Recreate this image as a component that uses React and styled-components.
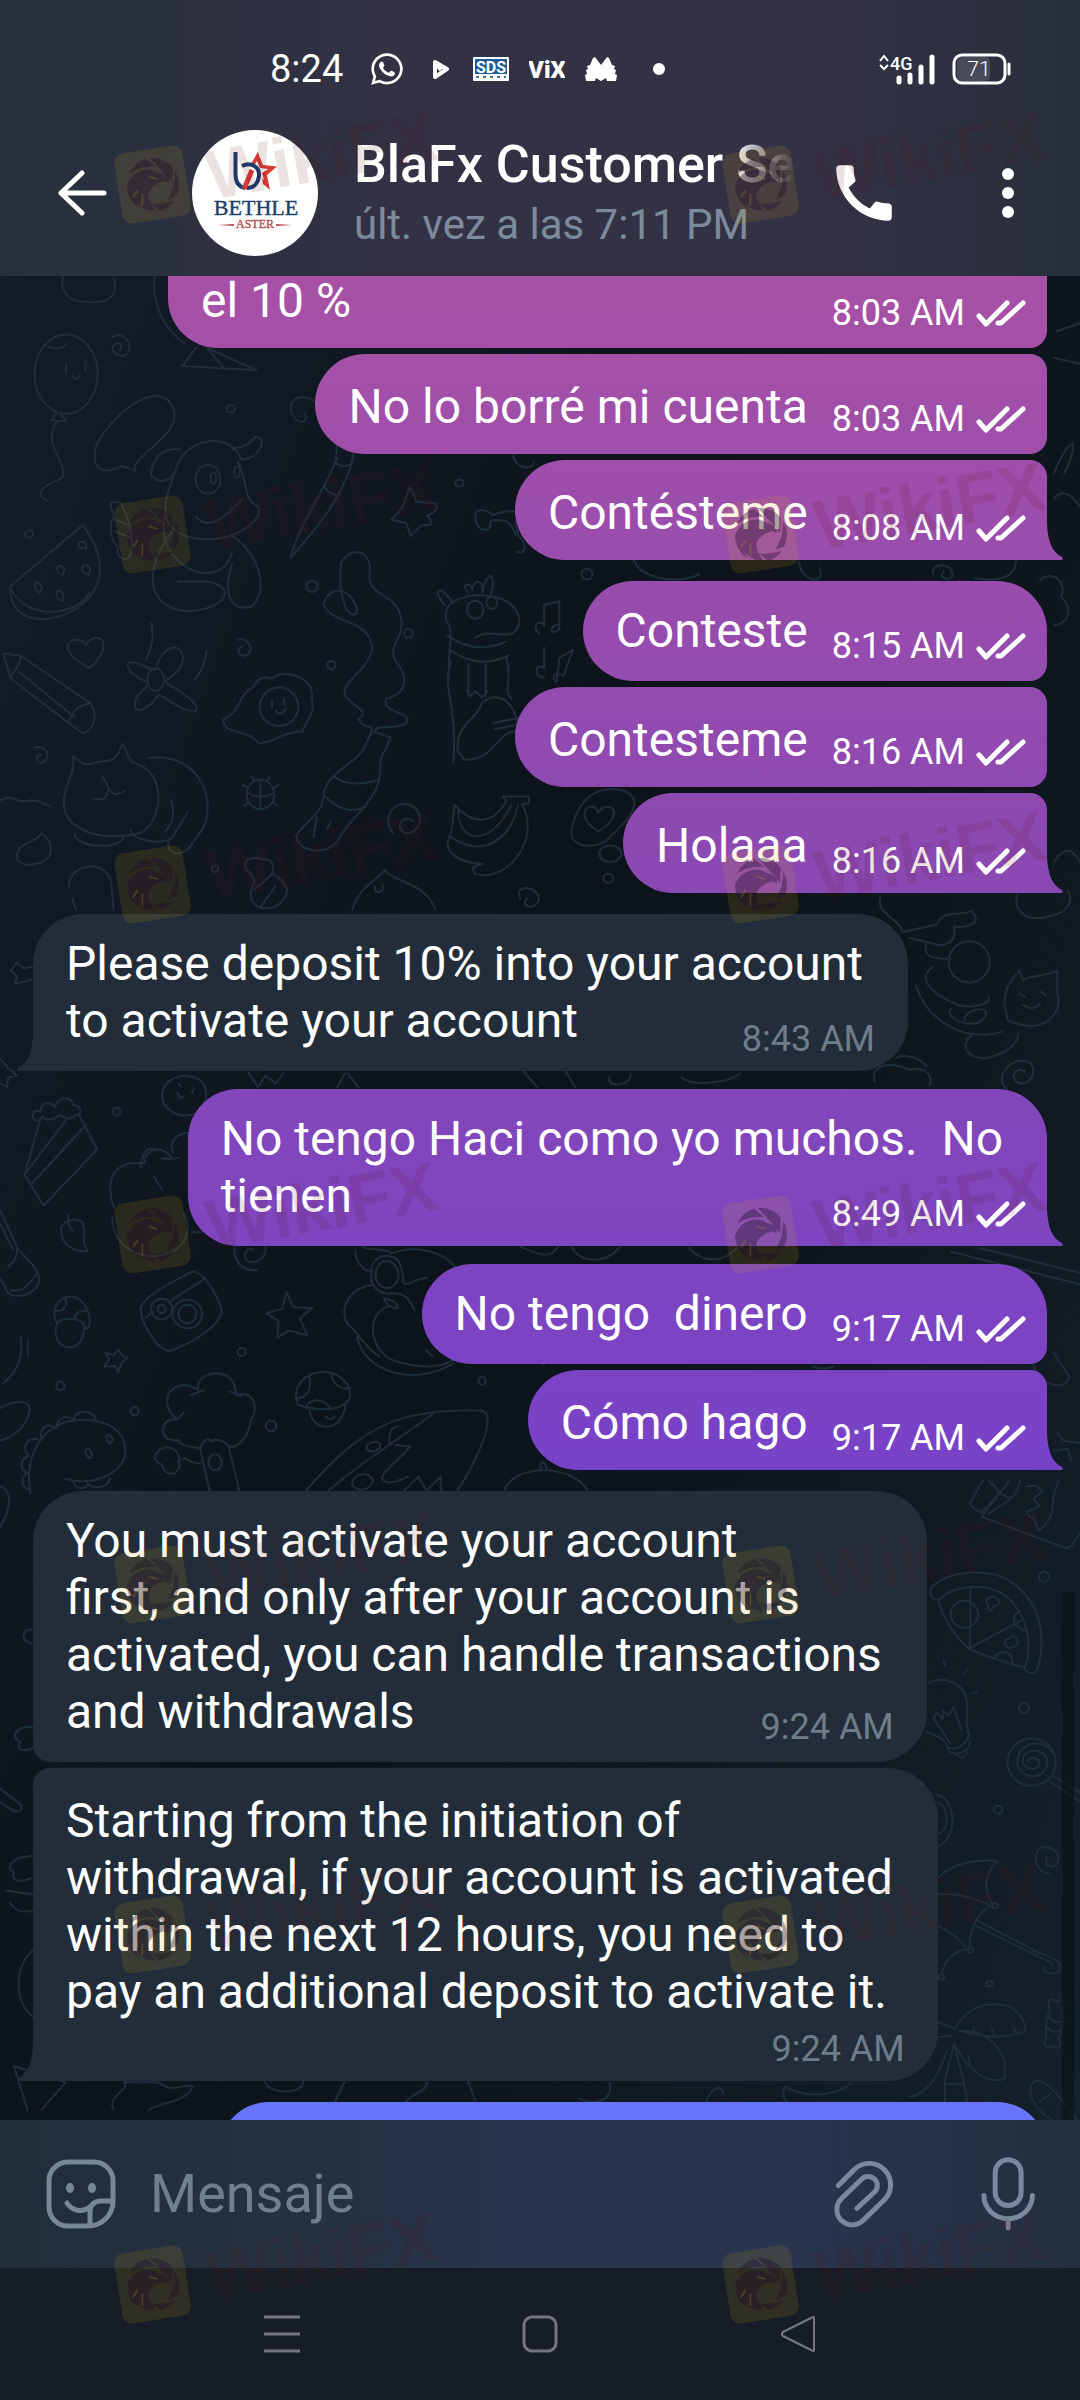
import React from "react";
import styled, { createGlobalStyle } from 'styled-components';
import { FaWhatsapp } from 'react-icons/fa';
import { MdCall } from 'react-icons/md';

const messages = [
  { text: '\nel 10 %', time: '8:03 AM', out: true, layout: 'corner', minWidth: 879 },
  { text: 'No lo borré mi cuenta', time: '8:03 AM', out: true },
  { text: 'Contésteme', time: '8:08 AM', out: true, last: true },
  { text: 'Conteste', time: '8:15 AM', out: true, first: true },
  { text: 'Contesteme', time: '8:16 AM', out: true },
  { text: 'Holaaa', time: '8:16 AM', out: true, last: true },
  { text: 'Please deposit 10% into your account\nto activate your account', time: '8:43 AM', first: true, last: true, layout: 'corner' },
  { text: 'No tengo Haci como yo muchos.  No\ntienen', time: '8:49 AM', out: true, first: true, last: true, layout: 'corner' },
  { text: 'No tengo  dinero', time: '9:17 AM', out: true, first: true },
  { text: 'Cómo hago', time: '9:17 AM', out: true, last: true },
  { text: 'You must activate your account\nfirst, and only after your account is\nactivated, you can handle transactions\nand withdrawals', time: '9:24 AM', first: true, layout: 'corner' },
  { text: 'Starting from the initiation of\nwithdrawal, if your account is activated\nwithin the next 12 hours, you need to\npay an additional deposit to activate it.', time: '9:24 AM', last: true, layout: 'below' },
  { text: '', out: true, first: true, minWidth: 828 },
];

const BackIcon = () => (
  <svg width="50" height="46" viewBox="0 0 50 46" fill="none" stroke="#fff" strokeWidth="5" strokeLinecap="round" strokeLinejoin="round">
    <path d="M24 3 L3 23 L24 43 M3 23 H46" />
  </svg>
);

const DotsIcon = () => (
  <svg width="20" height="52" viewBox="0 0 20 52" fill="#fff">
    <circle cx="10" cy="7" r="6" />
    <circle cx="10" cy="26" r="6" />
    <circle cx="10" cy="45" r="6" />
  </svg>
);

const AvatarLogo = () => (
  <svg width="126" height="126" viewBox="0 0 126 126">
    <circle cx="63" cy="63" r="63" fill="#fff" />
    <path d="M65.7 22 L71 35 L85 36.500 L75 45 L78 60 L71 54 L70 48 L72 50 L70 43 L76 39 L68 38 L65 31 L61 37 L58 36 Z" fill="#d93a36" />
    <path d="M43.500 22 V44 C43.500 52 47 57 53 58" fill="none" stroke="#1c3d6b" strokeWidth="4" />
    <path d="M50 36 C60 31 68 38 67 46 C66 54 61 58 55 58" fill="none" stroke="#1c3d6b" strokeWidth="4" />
    <path d="M52 59 L60 40" stroke="#d93a36" strokeWidth="5" />
    <text x="64" y="85" textAnchor="middle" fontFamily="'Liberation Serif', serif" fontSize="22" fill="#1f4066" stroke="#1f4066" strokeWidth="0.4">BETHLE</text>
    <text x="63" y="98" textAnchor="middle" fontFamily="'Liberation Serif', serif" fontSize="12" fill="#b3474a" stroke="#b3474a" strokeWidth="0.3">ASTER</text>
    <path d="M26 95 L42 94 V96 Z M100 95 L84 94 V96 Z" fill="#b3474a" />
  </svg>
);

const PlayIcon = () => (
  <svg width="28" height="20" viewBox="-7 0 28 20" fill="none" stroke="#fff" strokeWidth="4" strokeLinejoin="round">
    <path d="M3 18 V3 L15 10 Z M3 3 L9 11" />
  </svg>
);

const SdsIcon = () => (
  <svg width="36" height="24" viewBox="0 0 36 24">
    <rect width="36" height="24" rx="1" fill="#fff" />
    <rect x="2" y="2" width="32" height="15" fill="#1f5c94" />
    <text x="18" y="16" textAnchor="middle" fontFamily="Roboto, sans-serif" fontSize="16" fontWeight="700" fill="#fff">SDS</text>
    <path d="M3 20 H33" stroke="#41718f" strokeWidth="2" strokeDasharray="3 4" />
  </svg>
);

const VixIcon = () => (
  <svg width="36" height="36" viewBox="0 0 36 36">
    <text x="18" y="27" textAnchor="middle" fontFamily="Roboto, sans-serif" fontSize="24" fontWeight="900" fill="#fff">ViX</text>
  </svg>
);

const BatIcon = () => (
  <svg width="32" height="24" viewBox="0 0 32 24" fill="#fff">
    <path d="M10 0 L16 8 L22 0 L24 1 L27 8 L30 9 L29 12 L31 13 L30 17 L32 18 L31 24 L22 24 L21 21 L16 24 L11 21 L10 24 L1 24 L0 18 L2 17 L1 13 L3 12 L2 9 L5 8 L8 1 Z" />
  </svg>
);

const SignalIcon = () => (
  <svg width="57" height="32" viewBox="0 0 57 32">
    <path d="M1 8 L5 3 L9 8 M1 12 L5 16 L9 12" fill="none" stroke="#fff" strokeWidth="2" />
    <text x="11" y="17" fontFamily="Roboto, sans-serif" fontSize="18" fontWeight="500" fill="#fff">4G</text>
    <path d="M20 25 V29 M31 22 V29 M42 14 V29 M53 4 V29" stroke="#fff" strokeWidth="5" strokeLinecap="round" />
  </svg>
);

const BatteryIcon = () => (
  <svg width="60" height="32" viewBox="0 0 60 32">
    <rect x="5" y="4" width="33" height="24" rx="5" fill="#484959" />
    <rect x="2" y="2" width="51" height="28" rx="8" fill="none" stroke="#fff" strokeWidth="3" />
    <path d="M57 11 V21" stroke="#fff" strokeWidth="3" strokeLinecap="round" />
    <text x="27" y="23" textAnchor="middle" fontFamily="Roboto, sans-serif" fontSize="21" fontWeight="300" fill="#fff">71</text>
  </svg>
);

const TicksIcon = () => (
  <svg width="50" height="27" viewBox="0 0 50 27" fill="none" stroke="#fff" strokeWidth="5" strokeLinecap="round" strokeLinejoin="round">
    <path d="M3 16 L10 24 L31 3 M22 23 L25 23 L47 3" />
  </svg>
);

const StickerIcon = () => (
  <svg width="70" height="70" viewBox="0 0 70 70" fill="none" stroke="#768798" strokeWidth="5" strokeLinecap="round" strokeLinejoin="round">
    <path d="M22 3 H48 A19 19 0 0 1 67 22 V42 C67 56 56 67 42 67 H22 A19 19 0 0 1 3 48 V22 A19 19 0 0 1 22 3 Z" />
    <path d="M66 42 H55 C48 42 44 46 44 53 V66" />
    <path d="M21 44 C26 52 36 54 44 48" />
    <ellipse cx="24" cy="29" rx="4" ry="5" fill="#768798" stroke="none" />
    <ellipse cx="46" cy="29" rx="4" ry="5" fill="#768798" stroke="none" />
  </svg>
);

const ClipIcon = () => (
  <svg width="63" height="72" viewBox="100 90 190 215" fill="none" stroke="#7b879c" strokeWidth="15" strokeLinecap="round">
    <path d="M116 172 L164 124 A64 64 0 0 1 255 215 L191 277 A46 46 0 0 1 125 212 L186 153 A27 27 0 0 1 226 191 L172 241" />
  </svg>
);

const MicIcon = () => (
  <svg width="57" height="78" viewBox="540 80 170 235" fill="none" stroke="#7b879a" strokeWidth="15" strokeLinecap="round">
    <rect x="585" y="94" width="78" height="138" rx="39" />
    <path d="M551 202 A73 70 0 0 0 697 202 M624 272 V300" />
  </svg>
);

const WatermarkLogo = () => (
  <svg width="81" height="81" viewBox="0 0 81 81">
    <g transform="rotate(-9 40 40)">
      <path fillRule="evenodd" d="M16 5 H65 A10 10 0 0 1 75 15 V66 A10 10 0 0 1 65 76 H16 A10 10 0 0 1 6 66 V15 A10 10 0 0 1 16 5 Z" fill="#d9a818" fillOpacity="0.13" />
      <g fill="#1c0c2c" fillOpacity="0.36">
        <path d="M19 26 A27 27 0 0 1 38 14 L47 24 Q32 20 19 26 Z" />
        <path d="M42 14 A27 27 0 0 1 63 27 L60 42 L50 26 Z" />
        <path d="M65 31 A27 27 0 0 1 62 56 L53 58 L61 46 Z" />
        <path d="M59 60 A27 27 0 0 1 44 68 L36 59 Q48 62 59 60 Z" />
        <path d="M15 38 C20 26 38 20 48 30 C54 32 58 36 57 42 L52 39 C46 40 40 42 36 47 C33 52 35 57 39 67 C30 66 24 60 21 54 L24 62 C17 56 14 47 15 38 Z" />
      </g>
      <path d="M38 32 L46 36 M25 44 L19 50 M29 48 L27 60" stroke="#d9a818" strokeOpacity="0.2" strokeWidth="2" />
    </g>
  </svg>
);

// Each group keeps the drawing scale it was traced at, the stroke width stays constant
const Doodles = () => (
  <DoodleSvg aria-hidden="true">
    <g transform="translate(0 -6) scale(0.6888 0.4082)">
      <path d="M92 15 C85 50 100 80 125 78 C160 85 172 60 165 20 M225 10 C218 80 240 150 268 180 M285 190 L265 235 L373 246 L300 190 M300 190 L325 240" />
      <ellipse cx="96" cy="255" rx="46" ry="97" />
      <path d="M82 350 L74 368 L96 371 L88 351 M82 372 C60 430 100 470 90 510 C60 530 50 550 68 565 M96 230 V252 M124 225 V248 M105 260 Q110 275 116 258 M70 188 Q90 198 97 180" />
      <path d="M163 165 C180 145 195 185 185 205 C175 220 158 200 165 185 C172 170 180 190 174 195" />
      <path d="M252 340 C262 400 215 430 195 480 L197 492 L177 480 C130 520 130 440 150 400 C180 330 235 270 252 340" />
      <path d="M455 320 C430 295 415 330 425 355 C435 385 450 370 442 350" />
      <path d="M262 440 C235 430 218 470 220 505 C235 530 250 510 255 490 C270 400 340 400 350 465 C380 460 388 410 372 408 C350 445 345 430 338 440 M255 490 C240 560 220 640 285 658 C340 670 385 610 375 580 C350 560 362 520 345 470" />
      <ellipse cx="302" cy="513" rx="18" ry="35" />
      <ellipse cx="310" cy="510" rx="4" ry="14" />
      <ellipse cx="344" cy="495" rx="4" ry="14" />
      <path d="M285 605 Q305 650 352 560 M250 640 C200 750 220 840 280 835 C335 825 340 770 300 763 H258 M335 650 C370 680 395 780 365 825 C330 840 325 780 337 720 M240 600 C220 720 320 800 337 690" />
      <path d="M175 570 C150 560 165 590 165 600 C155 640 165 670 172 680 C165 710 190 720 190 690 C195 650 185 600 175 570 M165 610 L186 625 M166 640 L188 655" />
      <path d="M490 460 C470 540 430 640 422 705 C450 650 500 560 512 460 M470 530 Q480 555 495 550 M485 470 Q500 490 512 470 M490 400 L488 460 M520 400 L512 460" />
      <path d="M595 530 L605 568 L633 572 Q638 590 620 602 Q636 628 612 625 L596 652 L590 620 L568 612 L585 580 Z" />
      <path d="M690 600 C690 580 710 590 715 600 C740 585 760 590 765 610 C740 610 750 620 752 650 C765 670 765 700 750 690 M690 600 C688 640 715 650 712 615 C740 605 745 630 748 650" />
      <path d="M120 625 C150 690 155 760 125 810 C80 880 10 870 15 775 Z M15 780 C40 860 110 850 130 790" />
      <path d="M115 668 q12 -8 10 15 q-14 -2 -10 -15 M85 725 q12 -2 6 22 q-12 -6 -6 -22 M122 722 q14 4 6 25 q-14 -8 -6 -25 M52 765 q14 10 6 26 q-12 -10 -6 -26 M84 785 q12 4 6 26 q-12 -10 -6 -26" />
      <path d="M470 815 C485 755 520 800 518 840 C505 860 490 800 495 720 C510 670 540 690 537 740 C530 800 575 790 582 850 C590 900 560 920 575 960 C595 1000 590 1040 560 1050 C555 1090 600 1080 590 1110 C570 1130 545 1110 545 1130 M470 815 C475 870 540 850 540 930 C535 980 500 1000 500 1040 C510 1070 540 1080 520 1100 C530 1130 540 1110 540 1130" />
      <path d="M540 1130 L567 1145 L560 1175 C545 1200 560 1240 540 1290 C520 1340 500 1360 490 1400 C470 1440 430 1420 430 1385 C450 1340 470 1330 470 1280 C480 1220 520 1210 530 1165 Z M485 1240 Q505 1270 548 1250 M472 1290 Q502 1340 530 1315 M460 1340 L455 1390 M480 1350 L475 1370" />
      <path d="M652 1000 C650 930 660 880 648 860 C640 800 690 790 715 800 C750 810 765 860 745 890 C720 900 710 880 690 900 M645 820 C625 780 640 770 655 810 M680 790 C665 760 690 770 685 785 C690 745 705 770 700 790 C708 730 722 740 712 800" />
      <ellipse cx="690" cy="832" rx="12" ry="22" />
      <ellipse cx="714" cy="815" rx="8" ry="15" />
      <path d="M650 895 Q690 945 735 910 M652 930 Q695 980 738 945 M655 960 C640 1020 665 1060 658 1210 M735 950 C745 1000 730 1030 742 1050 M680 965 V1035 M705 965 V1045 M678 1030 L682 1045 L690 1032 L700 1047 L708 1032" />
      <path d="M665 1180 C660 1110 690 1110 700 1060 C730 1020 755 1080 750 1130 C720 1130 720 1200 675 1200 Z M715 1110 L775 1090 M718 1125 L778 1105" />
      <path d="M783 890 C772 880 780 850 790 870 V820 L812 812 V880 C800 900 795 870 812 868 M790 998 C775 1000 775 960 790 975 V925 M808 1010 C800 1000 805 980 818 995 L832 930 L812 950 L808 1010" />
      <path d="M130 975 C100 950 90 920 105 908 C115 900 122 910 125 920 C130 900 145 895 150 912 C152 940 140 960 130 975" />
      <path d="M5 940 L30 945 L130 1060 C145 1090 135 1130 120 1135 L100 1110 L15 1000 Z M30 945 C30 970 20 980 15 1000 M28 985 L108 1095 M100 1110 Q105 1070 130 1062" />
      <path d="M185 965 C195 950 215 980 225 980 C240 900 270 920 265 960 C262 990 240 1000 240 1010 C260 1030 290 1060 285 1080 C265 1085 245 1050 230 1040 C220 1070 200 1085 197 1075 C190 1040 215 1030 215 1010 C200 1000 185 985 185 965 M220 865 C225 920 215 940 212 955 M300 935 C298 970 290 985 282 1005" />
      <ellipse cx="226" cy="1003" rx="12" ry="28" />
      <path d="M345 905 C365 900 370 940 355 945 C345 945 343 925 352 922" />
      <path d="M395 1000 C420 970 460 1010 452 1050 C460 1090 440 1110 440 1130 C410 1130 395 1160 375 1160 C360 1120 320 1140 325 1100 C350 1080 345 1050 360 1030 C375 1020 370 990 395 1000" />
      <ellipse cx="405" cy="1070" rx="28" ry="47" />
      <path d="M395 1055 V1070 M412 1050 V1065 M400 1080 Q408 1095 415 1075" />
      <path d="M95 1330 C85 1270 110 1250 106 1190 C125 1220 125 1210 145 1205 C170 1200 170 1195 178 1160 L190 1205 C225 1220 230 1260 230 1300 C228 1340 215 1390 180 1385 C140 1395 105 1370 95 1330 M215 1195 C300 1180 320 1330 285 1390 C265 1450 240 1430 245 1400 M190 1370 C190 1400 240 1410 250 1390 L272 1330 M108 1380 C110 1420 180 1420 180 1385 M135 1295 Q155 1305 158 1270 Q165 1295 182 1275 M148 1240 Q155 1255 158 1270 M248 1298 C255 1330 250 1360 240 1375" />
      <path d="M0 1300 C20 1280 25 1310 40 1300 C55 1295 65 1310 74 1315 M50 1170 C70 1160 75 1200 60 1208 C50 1205 52 1185 60 1188" />
      <ellipse cx="378" cy="1285" rx="20" ry="36" />
      <path d="M358 1280 Q378 1300 398 1280 M378 1250 V1320 M365 1240 L370 1252 M392 1242 L387 1252 M352 1262 L360 1268 M404 1262 L397 1268 M354 1312 L361 1304 M402 1312 L396 1304" />
      <path d="M660 1310 C690 1370 720 1350 735 1300 L730 1290 H768 V1305 L758 1310 C785 1390 740 1500 690 1480 Q680 1462 700 1455 C660 1450 640 1420 655 1380 Z M665 1325 C665 1400 710 1420 742 1312 M655 1390 C700 1440 740 1400 752 1312" />
      <path d="M830 1370 C840 1290 870 1260 905 1275 C940 1300 910 1350 885 1390 C870 1420 825 1420 830 1370 M868 1375 C845 1350 845 1325 855 1315 C865 1312 868 1325 868 1330 C875 1310 890 1312 892 1330 C890 1350 880 1365 868 1375" />
      <path d="M25 1445 C20 1400 50 1410 60 1380 C80 1400 80 1450 50 1455 C40 1460 30 1455 25 1445 M100 1510 C100 1450 160 1440 162 1510 L165 1568 M105 1540 L110 1568 M365 1480 C340 1450 370 1430 380 1445 C395 1440 400 1460 395 1480 C420 1500 425 1530 400 1560 C370 1575 355 1540 370 1500 Z M368 1520 L395 1480 M378 1560 L400 1510" />
      <path d="M512 1568 C520 1510 545 1500 558 1470 C570 1500 620 1500 632 1568 M545 1510 C540 1530 560 1530 555 1505 M755 1540 C745 1500 785 1510 782 1545 C775 1570 755 1560 765 1540" />
      <path d="M570 1380 C555 1340 570 1300 595 1310 C620 1330 610 1380 590 1380 C570 1370 585 1330 600 1350" />
      <path d="M1510 760 C1530 730 1550 770 1540 800 C1560 830 1550 870 1530 870 M1500 830 C1520 850 1520 870 1510 880 M1530 500 C1540 450 1560 410 1558 430 C1558 460 1550 480 1545 500 M1530 560 C1545 530 1560 560 1568 580 M1535 150 L1568 130 M1530 215 L1568 230 M1530 1450 C1550 1400 1560 1430 1568 1450" />
      <path d="M920 710 C930 760 990 770 1015 745 M1160 715 C1165 770 1200 770 1190 730 M1355 745 C1350 715 1385 715 1383 750 C1375 765 1362 750 1370 740 M1415 755 C1470 770 1475 730 1475 710 M745 455 C750 490 775 490 775 470" />
      <ellipse cx="335" cy="340" rx="6" ry="9" />
      <ellipse cx="667" cy="522" rx="6" ry="9" />
      <ellipse cx="453" cy="775" rx="8" ry="14" />
      <ellipse cx="593" cy="890" rx="6" ry="11" />
      <ellipse cx="42" cy="647" rx="6" ry="9" />
      <ellipse cx="481" cy="968" rx="6" ry="10" />
      <ellipse cx="852" cy="745" rx="8" ry="13" />
      <ellipse cx="883" cy="1490" rx="7" ry="11" />
      <ellipse cx="886" cy="1430" rx="16" ry="20" />
      <ellipse cx="312" cy="1467" rx="5" ry="8" />
    </g>
    <g transform="translate(0 614) scale(0.6888 0.3827)">
      <path d="M1278 20 C1270 60 1310 80 1310 110 L1360 90 C1370 50 1390 70 1410 55 C1430 90 1400 100 1385 95 C1390 140 1370 150 1355 140 L1320 125 M1480 0 C1465 50 1490 85 1520 70 C1550 60 1560 30 1550 0" />
      <ellipse cx="1407" cy="188" rx="30" ry="54" />
      <path d="M1345 140 C1340 170 1350 180 1380 180 M1355 200 C1330 230 1350 270 1390 300 C1410 310 1440 300 1435 280 M1330 250 C1345 340 1400 400 1455 370 M1380 310 C1370 340 1420 370 1430 330 C1440 300 1400 310 1400 340" />
      <path d="M1462 330 C1450 270 1470 230 1480 210 L1485 235 C1510 215 1515 230 1535 210 V270 C1545 330 1510 370 1480 350 Q1460 345 1462 330 M1480 270 L1488 280 M1510 265 L1518 275 M1485 300 Q1500 320 1510 295" />
      <path d="M1410 380 C1395 400 1400 440 1430 440 C1460 430 1480 400 1478 375 M1270 500 C1262 460 1290 445 1320 470 C1340 460 1355 480 1350 510 M1300 440 C1310 430 1330 430 1345 460 M1462 520 C1440 490 1470 430 1495 450 C1510 480 1490 520 1475 500 C1465 480 1480 460 1488 475" />
      <path d="M15 210 L25 190 L35 205 L48 200 M15 210 L25 225 L22 245 L45 235 M0 440 L12 465 L25 485 L12 490 L10 515 L0 505" />
      <path d="M360 475 L375 515 L385 485 L400 505 L412 478 M500 480 L490 515 M505 480 L520 515 M760 475 L780 515 M820 470 L835 515 M885 490 C880 520 920 510 915 480 M990 490 C1000 510 1050 510 1075 480" />
      <path d="M755 932 C790 960 800 960 810 932 M830 932 C840 975 880 980 900 932 M1000 935 C1020 975 1050 975 1070 935 M1380 945 L1568 1030 M1420 935 L1568 1000 M1500 1240 C1510 1300 1550 1310 1552 1270 L1530 1210 M1535 1420 L1545 1440 L1568 1445 M1530 1465 L1550 1460 L1555 1490" />
      <path d="M1180 1245 C1190 1252 1200 1252 1210 1245 M790 1240 L765 1220" />
    </g>
    <g transform="translate(0 804) scale(0.4082 0.3333)">
      <path d="M82 115 C75 90 95 90 100 95 C95 65 125 65 135 80 C145 45 180 50 178 75 C205 75 200 110 185 105 C170 125 155 110 145 105 C130 125 110 120 105 110 C95 125 85 125 82 115 M98 120 L60 285 L107 377 L238 208 L195 108 M165 115 L62 280 M210 135 L77 312" />
      <path d="M397 50 C395 10 430 -20 470 -10 C510 0 520 60 480 100 C440 120 400 90 397 50 M437 10 L443 18 M475 25 L470 40 M434 38 Q440 60 450 50" />
      <path d="M280 385 C260 320 270 260 320 250 L355 248 C350 210 400 190 420 235 M345 262 C350 200 370 200 395 210 M425 220 C410 180 440 155 470 160 M378 290 C385 310 395 320 397 330 M395 235 Q425 240 438 232 M275 410 C275 500 340 540 400 525 C450 510 475 460 450 400 M470 455 Q500 460 510 450" />
      <path d="M168 405 C165 430 170 440 178 452 M150 455 C145 430 175 410 200 425 C215 450 195 480 215 513 C180 520 150 490 150 455 M0 390 L45 510 C80 550 110 590 90 620 C70 650 40 655 20 640 L-10 570 M0 430 L32 510 M20 560 C35 545 45 530 40 500 M25 630 C60 640 80 600 90 580" />
      <path d="M133 710 C130 660 170 630 200 665 C220 690 225 730 215 745 L207 742 C205 780 190 805 168 802 C140 800 130 760 140 730 Z M140 730 C150 710 205 710 207 742 M135 690 C160 700 165 670 160 655 M183 715 C185 695 200 690 216 693" />
      <path d="M345 690 C340 660 400 620 470 575 C500 570 545 670 543 700 C530 750 450 800 415 813 C380 810 345 720 345 690 M357 712 L375 695 M415 665 L503 595" />
      <ellipse cx="396" cy="687" rx="26" ry="31" />
      <ellipse cx="396" cy="687" rx="10" ry="13" />
      <ellipse cx="459" cy="702" rx="36" ry="43" />
      <ellipse cx="459" cy="702" rx="22" ry="28" />
      <path d="M702 635 L718 682 L765 685 L735 715 L752 765 L708 752 L680 772 L682 722 L652 700 L692 686 Z M290 810 L300 828 L313 832 L298 848 L290 877 L282 858 L255 860 L268 838 L258 818 L278 825 Z" />
      <path d="M50 770 C60 830 40 880 8 910 M68 780 V825 M575 500 C570 550 600 575 630 570 M650 500 C655 540 620 555 602 540 C595 515 610 500 620 510" />
      <path d="M910 580 C905 540 940 510 975 540 C990 570 985 600 990 610 C1010 620 1015 590 1045 595 M910 580 C905 620 930 645 960 640 C990 640 1000 650 1015 690 M915 615 C860 620 830 680 850 730 C880 760 890 800 930 830 M950 680 C900 700 900 800 960 840 C1010 860 1070 870 1110 840 M875 770 C890 880 1020 920 1110 850 M870 510 C870 540 890 580 910 570 M890 500 C905 515 935 500 960 520 C1020 490 1090 520 1115 560 M940 655 C960 660 975 670 975 685 C955 685 945 670 940 655 M1043 810 L1060 830" />
      <ellipse cx="948" cy="584" rx="28" ry="40" />
      <path d="M725 950 C725 900 760 875 795 875 C840 880 860 920 858 950 C850 985 800 1000 730 975 Z M812 880 C815 915 835 930 857 925 M758 890 C765 930 750 955 727 955 M750 985 C755 950 800 955 810 990 M758 990 C765 1060 840 1060 847 970 M798 1010 Q810 1025 820 1010" />
      <path d="M490 1105 C460 1100 440 1095 435 1080 C400 1090 385 1040 415 1020 L435 1018 C400 990 400 930 440 918 C460 910 470 920 485 930 C480 890 520 870 550 885 C580 900 575 930 580 945 C620 930 635 980 615 1020 C610 1070 580 1110 560 1098 C540 1070 515 1080 520 1085 C510 1070 500 1080 490 1105 M490 1105 L515 1240 M560 1100 L588 1240 M468 945 L500 930 M565 935 L590 948 M435 1018 L450 998 M490 1150 C450 1150 465 1120 435 1145 M440 1150 C440 1090 390 1090 380 1130 C378 1150 400 1150 398 1160 C405 1190 440 1190 440 1150" />
      <ellipse cx="527" cy="1147" rx="16" ry="24" />
      <path d="M75 1240 C60 1150 90 1030 190 1020 C270 1015 310 1060 307 1120 C300 1180 230 1220 160 1197 M100 1070 C100 1035 120 1030 138 1045 C140 1010 160 1005 180 1018 C190 985 225 990 235 1018 M92 1078 C60 1070 55 1110 70 1128 C45 1140 50 1170 68 1180 C50 1190 50 1220 72 1230 M180 1205 C185 1230 210 1230 215 1210 C225 1230 265 1225 270 1195" />
      <ellipse cx="217" cy="1120" rx="7" ry="15" transform="rotate(-20 217 1120)" />
      <ellipse cx="268" cy="1077" rx="7" ry="12" transform="rotate(-20 268 1077)" />
      <path d="M0 985 C30 960 70 960 73 985 C70 1030 40 1070 0 1082 M750 1232 C820 1130 900 1040 1000 1010 C1080 990 1150 990 1180 992 C1200 1000 1195 1020 1190 1060 C1170 1130 1150 1180 1120 1232 M1060 1003 C950 1100 870 1160 805 1232 M955 1095 C950 1060 960 1040 975 1038 M970 1095 L1005 1100 C970 1150 940 1170 935 1195 C950 1220 980 1200 1000 1190 M990 1232 L1025 1190 L1045 1232 L1080 1190 V1232" />
      <ellipse cx="915" cy="1100" rx="18" ry="13" transform="rotate(-30 915 1100)" />
      <ellipse cx="888" cy="1206" rx="26" ry="22" transform="rotate(-30 888 1206)" />
      <ellipse cx="286" cy="95" rx="9" ry="12" />
      <ellipse cx="148" cy="917" rx="10" ry="13" />
      <ellipse cx="330" cy="993" rx="10" ry="13" />
      <ellipse cx="664" cy="1038" rx="13" ry="16" />
      <ellipse cx="592" cy="816" rx="10" ry="12" />
      <ellipse cx="1181" cy="902" rx="9" ry="12" />
      <path d="M1235 1232 C1260 1150 1400 1150 1440 1232 M1325 1165 C1320 1140 1335 1140 1340 1168" />
    </g>
    <g transform="translate(910 1204) scale(0.3333 0.4082)">
      <path d="M220 0 L180 55 Q185 70 215 80 L270 30 L235 0 M300 0 L215 90 L460 165 Q480 170 490 155 L510 130 M330 0 C320 60 260 60 235 85 M350 15 H380 M380 15 L398 28 L370 45 L388 65 L350 78 Q355 95 370 90 L388 125 C400 110 430 100 428 60 C430 30 440 20 445 0 M265 30 L300 45" />
      <path d="M70 290 Q55 280 65 262 C130 215 260 215 320 260 C380 300 400 360 393 420 C388 460 380 475 362 473 Q345 470 345 460 C300 450 220 430 180 415 C130 380 100 340 85 295 Q75 295 70 290 M85 295 C130 255 230 250 290 285 C350 330 370 400 345 460 M182 260 L180 412 L338 342 M250 440 C265 415 305 415 307 448 M330 320 C305 330 300 360 350 370" />
      <ellipse cx="163" cy="329" rx="41" ry="33" />
      <path d="M230 300 C225 285 250 285 262 290 C275 300 265 310 250 308 C245 325 230 320 235 308 Z M285 400 C280 385 300 395 300 385 C315 375 325 390 322 402 C310 415 290 415 285 400" />
      <path d="M54 498 C90 480 150 490 168 530 C180 570 160 590 178 625 M45 615 C80 630 100 625 115 660 M115 655 C140 665 170 645 177 625 M118 665 C145 680 180 660 180 640 M140 672 Q160 690 172 665 M120 645 L70 582 L82 570 L98 585 L100 565 L115 577 L130 557 L155 612 M100 442 L106 455 M162 475 L172 465 M190 523 L201 518" />
      <ellipse cx="365" cy="691" rx="72" ry="58" />
      <path d="M355 690 C350 680 385 675 388 695 C385 715 340 710 338 688 C340 655 410 655 412 690 C410 740 325 735 322 690 C325 640 400 630 430 670 M430 725 L510 765 M420 738 L510 788" />
      <path d="M80 770 C140 780 145 880 82 898 M82 790 C120 800 120 860 82 868" />
      <path d="M418 965 C370 960 365 905 400 900 C440 895 460 930 435 945 C415 955 400 935 412 925" />
      <path d="M84 975 C130 935 200 930 262 933 C220 970 220 1010 250 1043 M86 1015 C140 1010 200 1025 250 1045 M240 1045 C200 1060 180 1100 178 1150 M80 1090 C130 1110 150 1130 175 1150 M175 1150 C130 1150 100 1180 94 1215 M200 1078 L385 1158 C420 1165 460 1180 450 1200 C440 1215 395 1210 402 1195 M192 1090 L380 1165 C410 1178 430 1180 425 1190" />
      <ellipse cx="255" cy="1043" rx="9" ry="7" />
      <ellipse cx="181" cy="1151" rx="9" ry="7" />
      <ellipse cx="94" cy="1217" rx="9" ry="7" />
      <path d="M415 1285 C415 1265 435 1275 440 1278 C460 1265 470 1285 455 1297 C465 1330 460 1350 445 1368 C460 1385 445 1400 430 1385 C405 1400 395 1375 410 1365 C405 1330 410 1310 420 1300 Z M415 1315 Q440 1335 458 1325 M410 1340 Q430 1358 450 1350" />
      <path d="M84 1328 L135 1345 C170 1290 230 1275 300 1290 C340 1310 350 1340 345 1350 C270 1375 200 1360 150 1350 C230 1345 300 1400 283 1468 C220 1480 170 1440 132 1380 M132 1380 L105 1470 V1525 M132 1380 L160 1470 L172 1525 M84 1365 L120 1362 M0 1512 C60 1500 90 1450 110 1400 M110 1480 H160 M190 1340 L195 1355 M245 1345 L255 1362 M310 1340 L318 1355 M175 1410 L180 1430" />
      <path d="M500 1568 C440 1500 400 1460 370 1475 C345 1500 380 1550 430 1568 M390 1522 L423 1502 M470 1555 L500 1560" />
      <ellipse cx="402" cy="237" rx="15" ry="12" />
      <ellipse cx="342" cy="558" rx="15" ry="12" />
      <ellipse cx="264" cy="808" rx="13" ry="10" />
      <ellipse cx="239" cy="1234" rx="9" ry="7" />
    </g>
    <g transform="translate(0 1194) scale(0.6888 0.4082)">
      <path d="M0 40 C20 50 15 100 0 140 M48 390 C30 390 30 420 46 425 M48 630 C20 625 15 660 30 665 C20 690 40 690 48 680 M0 780 L30 820 Q35 840 20 835 L0 815 M48 945 C10 950 10 980 20 985 C15 1010 30 1010 45 1000 M8 1030 L48 1040 M15 1060 C20 1080 35 1085 48 1080 M48 1175 C20 1220 20 1300 48 1340" />
      <path d="M20 1460 L40 1568 M95 1500 L60 1568 M20 1460 L95 1500 M165 1568 C155 1530 190 1520 180 1500 H230 C250 1530 270 1500 280 1510 C270 1550 240 1545 215 1568 M385 1500 C390 1530 440 1530 440 1500 M500 1500 L480 1568 M590 1568 C580 1530 620 1530 620 1500 M680 1500 L690 1545 M840 1540 C870 1560 890 1540 885 1500 M1020 1568 C1030 1510 1050 1500 1050 1530 M1140 1510 C1180 1550 1230 1520 1235 1500 M1140 1510 C1130 1540 1150 1568 1160 1568" />
    </g>
  </DoodleSvg>
);

const Message = ({ text, time, out, first, last, layout = 'inline', minWidth }) => (
  <Bubble $out={out} $first={first} $last={last} $layout={layout} $minWidth={minWidth}>
    <Text $out={out} $first={first} $layout={layout}>{text}</Text>
    {time && (
      <Meta $out={out} $last={last}>
        <time>{time}</time>
        {out && <TicksIcon />}
      </Meta>
    )}
  </Bubble>
);

const App = () => {
  return (
    <>
      <GlobalStyle />
      <Screen>
        <Header>
          <StatusBar>
            <Notifications>
              <Clock>8:24</Clock>
              <FaWhatsapp size={36} />
              <PlayIcon />
              <SdsIcon />
              <VixIcon />
              <BatIcon />
              <Dot />
            </Notifications>
            <System>
              <SignalIcon />
              <BatteryIcon />
            </System>
          </StatusBar>
          <AppBar>
            <IconButton aria-label="Atrás"><BackIcon /></IconButton>
            <Avatar><AvatarLogo /></Avatar>
            <Contact>
              <Name>BlaFx Customer Service</Name>
              <LastSeen>últ. vez a las 7:11 PM</LastSeen>
            </Contact>
            <Actions>
              <IconButton aria-label="Llamar"><MdCall size={74} /></IconButton>
              <IconButton aria-label="Más opciones"><DotsIcon /></IconButton>
            </Actions>
          </AppBar>
        </Header>
        <Chat>
          <Doodles />
          <List>
            {messages.map((message, i) => (
              <Message key={i} {...message} />
            ))}
          </List>
          <ScrollThumb />
        </Chat>
        <Composer>
          <IconButton aria-label="Stickers"><StickerIcon /></IconButton>
          <MessageInput type="text" placeholder="Mensaje" aria-label="Mensaje" />
          <Tools>
            <IconButton aria-label="Adjuntar"><ClipIcon /></IconButton>
            <IconButton aria-label="Grabar audio"><MicIcon /></IconButton>
          </Tools>
        </Composer>
        <NavBar>
          <IconButton aria-label="Recientes">
            <svg width="36" height="38" viewBox="0 0 36 38" stroke="#73777d" strokeWidth="3">
              <path d="M0 2 H36 M0 19 H36 M0 36 H36" />
            </svg>
          </IconButton>
          <IconButton aria-label="Inicio">
            <svg width="36" height="38" viewBox="0 0 36 38" fill="none" stroke="#73777d" strokeWidth="3">
              <rect x="2" y="2" width="32" height="34" rx="8" />
            </svg>
          </IconButton>
          <IconButton aria-label="Volver">
            <svg width="36" height="38" viewBox="0 0 36 38" fill="none" stroke="#73777d" strokeWidth="2" strokeLinejoin="round">
              <path d="M34 3 V35 Q34 37 31 35 L3 21 Q1 19 3 17 L31 3 Q34 1 34 3 Z" />
            </svg>
          </IconButton>
        </NavBar>
        <Watermarks aria-hidden="true">
          {Array.from({ length: 14 }, (_, i) => (
            <Watermark key={i}>
              <WatermarkLogo />
              <WatermarkText>WikiFX</WatermarkText>
            </Watermark>
          ))}
        </Watermarks>
      </Screen>
    </>
  );
}

const GlobalStyle = createGlobalStyle`
  * {
    box-sizing: border-box;
  }
  body {
    margin: 0;
    background: #161d26;
    font-family: Roboto, sans-serif;
  }
`;

const Screen = styled.div`
  position: relative;
  display: flex;
  flex-direction: column;
  height: 100vh;
  overflow: hidden;
`;

const Header = styled.header`
  background: linear-gradient(90deg, #27303c 0%, #2b303e 15%, #333245 40%, #333245 75%, #282e3b 100%);
  color: white;
`;

const StatusBar = styled.div`
  display: flex;
  align-items: center;
  justify-content: space-between;
  height: 110px;
  padding: 28px 68px 0 270px;
`;

const Notifications = styled.div`
  display: flex;
  align-items: center;
  gap: 20px;
`;

const Clock = styled.span`
  margin-right: 6px;
  font-size: 38px;
  line-height: 44px;
`;

const Dot = styled.span`
  width: 12px;
  height: 12px;
  margin-left: 16px;
  border-radius: 50%;
  background: white;
`;

const System = styled.div`
  display: flex;
  align-items: center;
  gap: 16px;
`;

const AppBar = styled.div`
  display: flex;
  align-items: center;
  height: 166px;
  padding: 0 62px 0 58px;
`;

const IconButton = styled.button`
  display: flex;
  flex: none;
  padding: 0;
  border: 0;
  background: none;
  color: inherit;
`;

const Avatar = styled.div`
  display: flex;
  margin: 0 36px 0 84px;
`;

const Contact = styled.div`
  flex: 1;
  min-width: 0;
`;

const Name = styled.h1`
  margin: 0;
  font-size: 52px;
  font-weight: 500;
  line-height: 64px;
  white-space: nowrap;
  overflow: hidden;
  mask-image: linear-gradient(90deg, #000 calc(100% - 64px), transparent);
`;

const LastSeen = styled.p`
  margin: 0;
  font-size: 42px;
  line-height: 56px;
  white-space: nowrap;
  color: #7d8a9b;
`;

const Actions = styled.div`
  display: flex;
  align-items: center;
  gap: 97px;
  margin-left: 32px;
`;

const Chat = styled.main`
  position: relative;
  flex: 1;
  min-height: 0;
  overflow: hidden;
  background: linear-gradient(110deg, #121b28 0%, #0d131a 45%, #0e151c 65%, #14202b 100%);
`;

const DoodleSvg = styled.svg`
  position: absolute;
  inset: 0;
  width: 100%;
  height: 100%;
  fill: none;
  stroke: #1f2d3a;
  stroke-width: 2px;
  stroke-linecap: round;
  stroke-linejoin: round;
  path, ellipse {
    vector-effect: non-scaling-stroke;
  }
`;

const List = styled.ul`
  position: relative;
  display: flex;
  flex-direction: column;
  margin: -85px 0 0;
  padding: 0 33px;
  list-style: none;
`;

const outgoing = `linear-gradient(180deg, #a751a5 0px, #a651a6 300px, #9c4eab 500px, #8948b3 900px, #7e45c0 1250px, #7842c8 1480px, #6874fa 2100px) fixed`;

const corners = ({ $out, $first, $last }) => {
  const near = $first ? 50 : 17;
  const tail = $last ? 0 : 17;
  return $out ? `50px ${near}px ${tail}px 50px` : `${near}px 50px 50px ${tail}px`;
}

const spacing = ({ $first, $last }) => {
  if (!$last) return '6px';
  return $first ? '18px' : '21px';
}

const columns = {
  inline: 'grid-template-columns: auto auto; column-gap: 24px;',
  corner: '& > * { grid-area: 1 / 1; }',
  below: 'grid-template-rows: auto auto;',
};

const Bubble = styled.li`
  position: relative;
  display: grid;
  ${({ $layout }) => columns[$layout]}
  align-self: ${({ $out }) => ($out ? 'flex-end' : 'flex-start')};
  min-width: ${({ $minWidth }) => ($minWidth ? `${$minWidth}px` : 'auto')};
  min-height: 100px;
  margin-bottom: ${spacing};
  padding: ${({ $out }) => ($out ? '0 21px 0 33px' : '0 33px')};
  border-radius: ${corners};
  background: ${({ $out }) => ($out ? outgoing : '#222d39')};
  color: white;

  ${({ $last, $out }) => $last && `
    &::after {
      content: '';
      position: absolute;
      bottom: 0;
      ${$out ? 'left: 100%;' : 'right: 100%;'}
      width: 16px;
      height: 36px;
      background: ${$out ? outgoing : '#222d39'};
      clip-path: path('${$out ? 'M0 0 C1 18 5 28 15 33 Q17 36 14 36 H0 Z' : 'M16 0 C15 18 11 28 1 33 Q-1 36 2 36 H16 Z'}');
    }
  `}
`;

const Text = styled.p`
  margin: 0;
  margin-right: ${({ $layout, $out }) => ($layout === 'inline' ? 0 : $out ? '23px' : '12px')};
  padding: ${({ $first, $layout }) => `${$first ? 21 : 24}px 0 ${$layout === 'below' ? 8 : $first ? 22 : 19}px`};
  font-size: 48px;
  line-height: 57px;
  white-space: pre-wrap;
`;

const Meta = styled.div`
  display: flex;
  align-items: center;
  align-self: end;
  justify-self: end;
  gap: 11px;
  padding-bottom: ${({ $last }) => ($last ? 11 : 14)}px;
  font-size: 36px;
  line-height: 42px;
  white-space: nowrap;
  color: ${({ $out }) => ($out ? '#fff' : '#6f7d8a')};
`;

const ScrollThumb = styled.div`
  position: absolute;
  right: 6px;
  bottom: 0;
  width: 12px;
  height: 528px;
  background: rgba(8, 12, 17, 0.5);
`;

const Composer = styled.footer`
  display: flex;
  align-items: center;
  height: 148px;
  padding: 0 43px 0 46px;
  background: linear-gradient(90deg, #222d3a 0%, #25313f 25%, #29344d 50%, #29344d 75%, #232f3e 100%);
`;

const MessageInput = styled.input`
  flex: 1;
  min-width: 0;
  margin: 0 34px;
  padding: 0;
  border: 0;
  background: none;
  font-family: inherit;
  font-size: 54px;
  line-height: 64px;
  color: white;
  &::placeholder {
    color: #6f7f90;
    opacity: 1;
  }
`;

const Tools = styled.div`
  display: flex;
  align-items: center;
  gap: 84px;
`;

const NavBar = styled.nav`
  display: flex;
  align-items: center;
  justify-content: center;
  gap: 222px;
  height: 132px;
  background: #161d26;
`;

const Watermarks = styled.div`
  position: absolute;
  inset: 0;
  display: grid;
  grid-template-columns: repeat(2, 608px);
  grid-auto-rows: 350px;
  padding: 144px 0 0 112px;
  overflow: hidden;
  pointer-events: none;
`;

const Watermark = styled.div`
  display: flex;
  align-items: flex-start;
  gap: 14px;
`;

const WatermarkText = styled.span`
  font-family: 'Liberation Sans', sans-serif;
  font-size: 70px;
  font-weight: 700;
  line-height: 64px;
  color: rgba(90, 20, 20, 0.12);
  transform: rotate(-10deg);
  transform-origin: left center;
`;

export default App;
